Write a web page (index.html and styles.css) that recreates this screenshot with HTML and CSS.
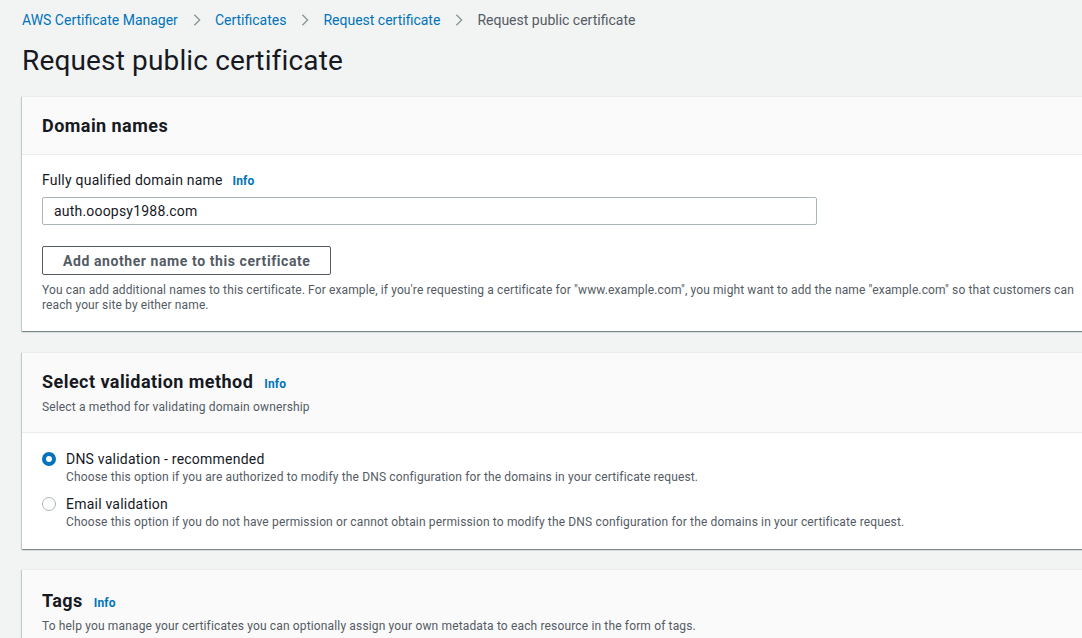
FILE: index.html
```html
<!DOCTYPE html>
<html>
<head>
<meta charset="utf-8">
<link rel="stylesheet" href="styles.css">
</head>
<body>
<div class="page">
  <nav class="crumbs">
    <a class="crumb">AWS Certificate Manager</a>
    <svg class="chev" viewBox="0 0 16 16"><path d="M5 2l6 6-6 6" fill="none" stroke="currentColor" stroke-width="1.5"/></svg>
    <a class="crumb">Certificates</a>
    <svg class="chev" viewBox="0 0 16 16"><path d="M5 2l6 6-6 6" fill="none" stroke="currentColor" stroke-width="1.5"/></svg>
    <a class="crumb">Request certificate</a>
    <svg class="chev" viewBox="0 0 16 16"><path d="M5 2l6 6-6 6" fill="none" stroke="currentColor" stroke-width="1.5"/></svg>
    <span class="crumb current">Request public certificate</span>
  </nav>
  <h1 class="title">Request public certificate</h1>

  <section class="card card-first">
    <div class="card-head">
      <h2 class="card-title">Domain names</h2>
    </div>
    <div class="card-body">
      <div class="label">Fully qualified domain name <span class="info">Info</span></div>
      <div class="input">auth.ooopsy1988.com</div>
      <button class="btn">Add another name to this certificate</button>
      <p class="hint">You can add additional names to this certificate. For example, if you're requesting a certificate for "www.example.com", you might want to add the name "example.com" so that customers can reach your site by either name.</p>
    </div>
  </section>

  <section class="card">
    <div class="card-head">
      <h2 class="card-title">Select validation method <span class="info">Info</span></h2>
      <p class="card-sub">Select a method for validating domain ownership</p>
    </div>
    <div class="card-body radios">
      <div class="radio-row">
        <span class="radio checked"></span>
        <div>
          <div class="radio-label">DNS validation - recommended</div>
          <div class="radio-desc">Choose this option if you are authorized to modify the DNS configuration for the domains in your certificate request.</div>
        </div>
      </div>
      <div class="radio-row">
        <span class="radio"></span>
        <div>
          <div class="radio-label">Email validation</div>
          <div class="radio-desc">Choose this option if you do not have permission or cannot obtain permission to modify the DNS configuration for the domains in your certificate request.</div>
        </div>
      </div>
    </div>
  </section>

  <section class="card card-last">
    <div class="card-head">
      <h2 class="card-title">Tags <span class="info">Info</span></h2>
      <p class="card-sub">To help you manage your certificates you can optionally assign your own metadata to each resource in the form of tags.</p>
    </div>
  </section>
</div>
</body>
</html>
```

FILE: styles.css
```css
html, body {
  margin: 0;
  padding: 0;
  background: #f2f3f3;
  overflow: hidden;
  height: 638px;
}
body {
  font-family: Roboto, "Noto Sans", sans-serif;
  color: #16191f;
  letter-spacing: 0.15px;
}
.page {
  padding: 0 0 0 22px;
  width: 1090px;
}
.crumbs {
  display: flex;
  align-items: center;
  height: 40px;
  font-size: 14px;
  letter-spacing: 0;
}
.crumb {
  color: #0073bb;
}
.crumb.current {
  color: #545b64;
}
.chev {
  width: 14px;
  height: 14px;
  color: #879596;
  margin: 0 11px 0 12px;
}
.title {
  font-size: 28px;
  font-weight: 400;
  margin: 0;
  line-height: 40px;
  height: 40px;
  padding-top: 1px;
  margin-bottom: 15px;
  letter-spacing: 0.15px;
}
.card {
  background: #fff;
  box-shadow: 0 1px 1px 0 rgba(0,28,36,.3), 1px 1px 1px 0 rgba(0,28,36,.15), -1px 1px 1px 0 rgba(0,28,36,.15);
  border-top: 1px solid #eaeded;
  margin-bottom: 20px;
}
.card-first {
  margin-bottom: 21px;
}
.card-head {
  background: #fafafa;
  border-bottom: 1px solid #eaeded;
  padding: 18px 20px 17px;
}
.card-last .card-head {
  padding-top: 20px;
}
.card-title {
  margin: 0;
  font-size: 18px;
  font-weight: 700;
  line-height: 22px;
  letter-spacing: 0.45px;
}
.card-sub {
  margin: 4px 0 0;
  font-size: 12px;
  color: #545b64;
  line-height: 16px;
}
.info {
  font-size: 12px;
  font-weight: 700;
  color: #0073bb;
  margin-left: 6px;
  letter-spacing: 0.2px;
}
.card-body {
  padding: 15px 20px 18px;
}
.label {
  font-size: 14px;
  line-height: 20px;
  margin-bottom: 6px;
  letter-spacing: 0.22px;
}
.input {
  width: 775px;
  height: 28px;
  box-sizing: border-box;
  border: 1px solid #aab7b8;
  border-radius: 2px;
  padding: 0 11px;
  font-size: 14px;
  line-height: 26px;
  letter-spacing: 0.2px;
}
.btn {
  display: block;
  margin-top: 21px;
  height: 29px;
  box-sizing: border-box;
  border: 1px solid #545b64;
  border-radius: 2px;
  background: #fff;
  color: #545b64;
  font-family: inherit;
  font-size: 14px;
  font-weight: 700;
  letter-spacing: 0.58px;
  padding: 0 20px;
}
.hint {
  margin: 8px 0 0;
  font-size: 12px;
  color: #545b64;
  line-height: 15px;
  max-width: 1040px;
  letter-spacing: 0.12px;
}
.radios {
  padding: 16px 20px 19px;
}
.radio-row {
  display: flex;
  gap: 10px;
  margin-bottom: 9px;
}
.radio-row:last-child {
  margin-bottom: 0;
}
.radio {
  width: 14px;
  height: 14px;
  box-sizing: border-box;
  border-radius: 50%;
  border: 1px solid #aab7b8;
  margin-top: 3px;
  flex: none;
}
.radio.checked {
  border: 4px solid #0073bb;
}
.radio-label {
  font-size: 14px;
  line-height: 20px;
  letter-spacing: 0.22px;
}
.radio-desc {
  font-size: 12px;
  color: #545b64;
  line-height: 16px;
}
```
